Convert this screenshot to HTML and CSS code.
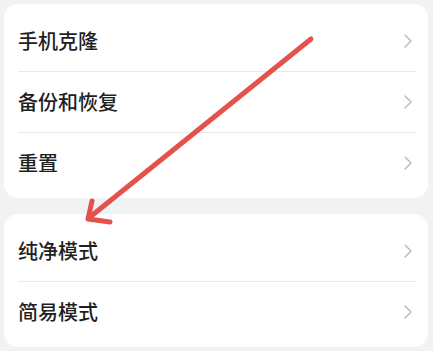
FILE: index.html
```html
<!DOCTYPE html>
<html lang="zh">
<head>
<meta charset="utf-8">
<link rel="stylesheet" href="styles.css">
</head>
<body>
<div class="page">
  <div class="card">
    <div class="row"><span class="label">手机克隆</span><svg class="chev" viewBox="0 0 10 16"><path d="M2 2 L8 8 L2 14"/></svg></div>
    <div class="sep"></div>
    <div class="row"><span class="label">备份和恢复</span><svg class="chev" viewBox="0 0 10 16"><path d="M2 2 L8 8 L2 14"/></svg></div>
    <div class="sep"></div>
    <div class="row"><span class="label">重置</span><svg class="chev" viewBox="0 0 10 16"><path d="M2 2 L8 8 L2 14"/></svg></div>
  </div>
  <div class="card">
    <div class="row"><span class="label">纯净模式</span><svg class="chev" viewBox="0 0 10 16"><path d="M2 2 L8 8 L2 14"/></svg></div>
    <div class="sep"></div>
    <div class="row"><span class="label">简易模式</span><svg class="chev" viewBox="0 0 10 16"><path d="M2 2 L8 8 L2 14"/></svg></div>
  </div>
  <svg class="arrow" viewBox="0 0 433 351" width="433" height="351">
    <line x1="311" y1="39" x2="90" y2="217"/>
    <polyline points="92,201 88,219 110,222"/>
  </svg>
</div>
</body>
</html>
```

FILE: styles.css
```css
html, body {
  margin: 0;
  padding: 0;
  background: #f1f2f4;
}
.page {
  position: relative;
  width: 433px;
  height: 351px;
  box-sizing: border-box;
  padding: 4px 5px 0 4px;
  display: flex;
  flex-direction: column;
  gap: 16px;
  font-family: "Noto Sans CJK SC", "Noto Sans", sans-serif;
}
.card {
  background: #ffffff;
  border-radius: 14px;
  padding: 7px 0 5px;
}
.row {
  height: 60px;
  display: flex;
  align-items: center;
  justify-content: space-between;
  padding: 0 15px 0 14px;
}
.label {
  font-size: 20px;
  font-weight: 500;
  color: #1f1f1f;
  line-height: 1;
}
.chev {
  width: 10px;
  height: 16px;
  fill: none;
  stroke: #bcbcbc;
  stroke-width: 1.5;
  stroke-linecap: round;
  stroke-linejoin: round;
}
.sep {
  height: 1px;
  background: #e9e9e9;
  margin: 0 12px 0 14px;
}
.arrow {
  position: absolute;
  left: 0;
  top: 0;
  pointer-events: none;
}
.arrow line, .arrow polyline {
  fill: none;
  stroke: #e5514b;
  stroke-width: 5;
  stroke-linecap: round;
  stroke-linejoin: round;
}
```
